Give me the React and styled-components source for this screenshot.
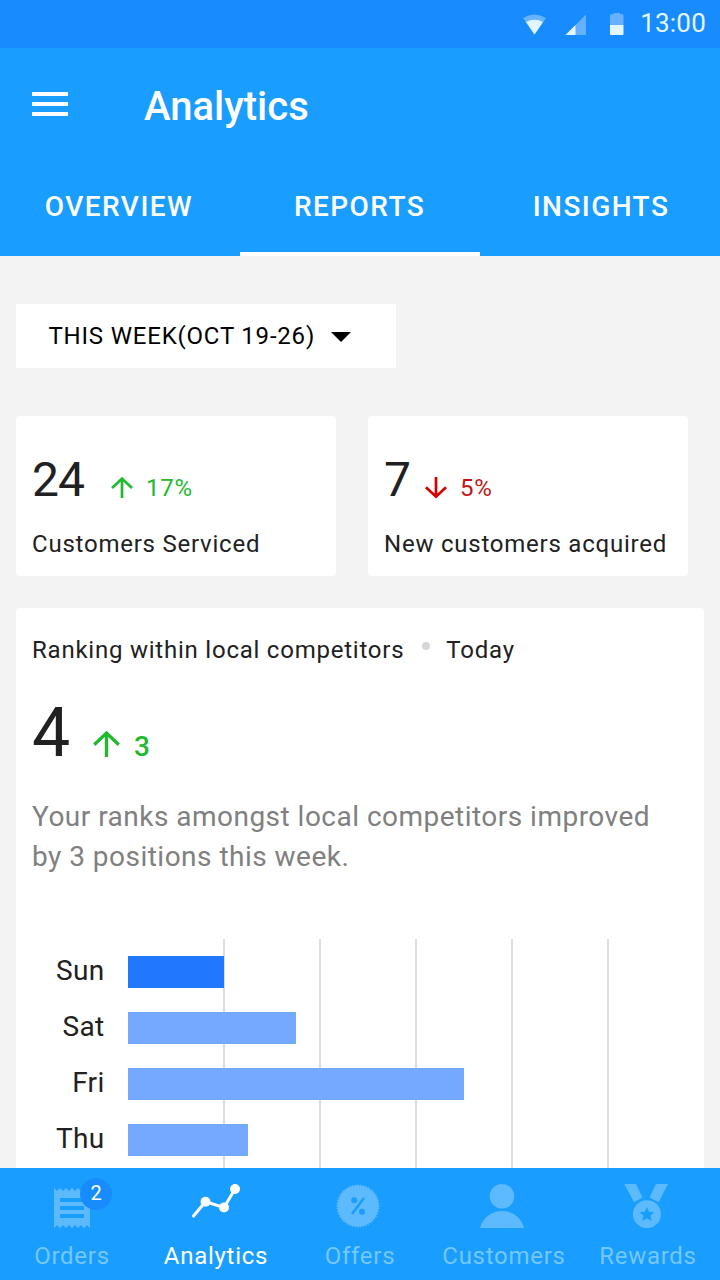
import React from 'react';
import styled, { createGlobalStyle } from 'styled-components';

const GlobalStyle = createGlobalStyle`
  *, *::before, *::after { box-sizing: border-box; }
  body { margin: 0; background: #f3f3f3; font-family: Roboto, "Liberation Sans", sans-serif; }
  button { font: inherit; border: 0; padding: 0; background: none; color: inherit; }
  svg { display: block; flex: none; }
`;

const Screen = styled.div`
  width: 720px;
  height: 1280px;
  display: flex;
  flex-direction: column;
  overflow: hidden;
  color: #212121;
`;

const StatusBar = styled.div`
  flex: none;
  height: 48px;
  padding-right: 14px;
  display: flex;
  align-items: center;
  justify-content: flex-end;
  background: #188bff;
`;

const Clock = styled.span`
  margin-left: 15px;
  padding-bottom: 2px;
  font-size: 26px;
  line-height: 46px;
  letter-spacing: 0.2px;
  color: #e4f7ff;
`;

const AppBar = styled.header`
  flex: none;
  height: 208px;
  display: flex;
  flex-direction: column;
  background: #199dff;
  color: #fff;
`;

const TitleRow = styled.div`
  height: 112px;
  padding: 0 32px;
  display: flex;
  align-items: center;
`;

const MenuButton = styled.button`
  width: 36px;
  display: flex;
  flex-direction: column;
  gap: 6px;
`;

const MenuLine = styled.span`
  height: 4px;
  background: #fff;
`;

const Title = styled.h1`
  margin: 5px 0 0 76px;
  font-size: 40px;
  line-height: 48px;
  font-weight: 500;
`;

const Tabs = styled.nav`
  flex: 1;
  display: grid;
  grid-template-columns: repeat(3, 240px);
`;

const Tab = styled.button`
  padding: ${(p) => p.$inset || '2px 0 0'};
  font-size: 28px;
  line-height: 90px;
  font-weight: 500;
  letter-spacing: 1.45px;
  border-bottom: 4px solid ${(p) => (p.$active ? '#fff' : 'transparent')};
`;

const Content = styled.main`
  flex: 1;
  min-height: 0;
  overflow: hidden;
  padding: 48px 16px 0;
  display: flex;
  flex-direction: column;
  align-items: stretch;
`;

const PeriodSelect = styled.button`
  flex: none;
  width: 380px;
  height: 64px;
  padding-left: 32.5px;
  display: flex;
  align-items: center;
  gap: 15.5px;
  background: #fff;
  color: #000;
  font-size: 24px;
  line-height: 64px;
  letter-spacing: 0.8px;

  svg { margin-top: 2px; }
`;

const Stats = styled.section`
  flex: none;
  margin: 48px 0 32px;
  display: flex;
  gap: 32px;
`;

const Card = styled.article`
  background: #fff;
  border-radius: 4px;
`;

const StatCard = styled(Card)`
  width: 320px;
  height: 160px;
  padding: 36px 16px 0;
`;

const Figures = styled.div`
  display: flex;
  align-items: baseline;
`;

const Value = styled.span`
  width: ${(p) => p.$width}px;
  font-size: ${(p) => p.$size}px;
  line-height: 56px;
  letter-spacing: -1px;
`;

const Delta = styled.span`
  display: flex;
  align-items: baseline;
  gap: ${(p) => p.$gap}px;
  font-size: ${(p) => p.$size}px;
  font-weight: ${(p) => p.$weight || 400};
  line-height: 32px;
  letter-spacing: 0.7px;
  color: ${(p) => p.$color};

  svg { transform: translateY(${(p) => p.$drop}px); }
`;

const Label = styled.div`
  font-size: 24px;
  line-height: 32px;
  letter-spacing: 0.77px;
  white-space: nowrap;
`;

const StatLabel = styled(Label)`
  margin-top: 20px;
`;

const RankingCard = styled(Card)`
  flex: none;
  padding: 26px 16px 0;
`;

const RankingHeading = styled.div`
  display: flex;
  align-items: center;
`;

const Dot = styled.i`
  width: 8px;
  height: 8px;
  margin: -8px 16px 0 18px;
  border-radius: 50%;
  background: #d6d6d6;
`;

const RankFigures = styled(Figures)`
  margin-top: 39px;
`;

const Summary = styled.p`
  margin: 34px 0 0;
  font-size: 28px;
  line-height: 40px;
  letter-spacing: 0.48px;
  color: #808080;
  white-space: nowrap;
`;

const Chart = styled.div`
  margin-top: 62px;
  display: grid;
  grid-template-columns: 72.5px 1fr;
  column-gap: 23.5px;
`;

const Days = styled.div`
  padding-top: 17px;
  display: grid;
  grid-auto-rows: 32px;
  row-gap: 24px;
  text-align: right;
  font-size: 28px;
  line-height: 30px;
  letter-spacing: 0.3px;
`;

const Plot = styled.div`
  display: grid;
  > * { grid-area: 1 / 1; }
`;

const GridLines = styled.div`
  display: flex;
  padding-left: 1px;
`;

const GridLine = styled.i`
  width: 96px;
  border-right: 2px solid #dcdcdc;
`;

const Bars = styled.div`
  padding: 17px 0 24px;
  display: grid;
  grid-auto-rows: 32px;
  row-gap: 24px;
`;

const Bar = styled.div`
  background: ${(p) => (p.$current ? '#2277ff' : '#75a9ff')};
`;

const BottomNav = styled.nav`
  flex: none;
  height: 112px;
  display: grid;
  grid-template-columns: repeat(5, 144px);
  background: #199dff;
`;

const NavItem = styled.button`
  position: relative;
  display: flex;
  flex-direction: column;
  align-items: center;
  justify-content: flex-start;
  padding-top: 12px;
  font-size: 24px;
  line-height: 32px;
  letter-spacing: 0.72px;
  color: ${(p) => (p.$active ? '#fff' : '#75c8ff')};

  svg { color: ${(p) => (p.$active ? '#fff' : '#5ebaff')}; margin-bottom: 12px; }
`;

const Badge = styled.span`
  position: absolute;
  left: 80px;
  top: 10px;
  width: 32px;
  height: 32px;
  border-radius: 50%;
  background: #188bff;
  color: #fff;
  font-size: 20px;
  line-height: 31px;
  letter-spacing: 0;
  text-align: center;
`;

const Arrow = ({ size, down }) => (
  <svg width={size} height={size} viewBox="0 0 22 22" fill="none" stroke={down ? '#d50000' : '#22b92f'} strokeWidth="2.7">
    <path d={down ? 'M11 0V20M1 10.2L11 19.700L21 10.2' : 'M11 22V2.500M1 12L11 2.500L21 12'} />
  </svg>
);

const StatusIcons = () => (
  <svg width="104" height="24" viewBox="521 12 104 24">
    <path d="M523 18Q534.500 11 546 18L534.500 34.500Z" fill="#68b3ff" />
    <path d="M526 22Q534.500 17.500 543 22L534.500 34.500Z" fill="#e3f5ff" />
    <path d="M565.500 35L586 14.500V35Z" fill="#65b1ff" />
    <path d="M565.500 35L575.500 25V35Z" fill="#e3f5ff" />
    <path d="M613.500 13H620V14.200H622Q623.500 14.200 623.500 15.500V25H610V15.500Q610 14.200 611.500 14.200H613.500Z" fill="#65b1ff" />
    <path d="M610 25H623.500V34Q623.500 35 622.500 35H611Q610 35 610 34Z" fill="#e3f5ff" />
  </svg>
);

const toothed = (left, right, y, dir) => {
  const step = (right - left) / 6;
  let d = '';
  for (let i = 0; i < 6; i += 1) {
    const a = dir > 0 ? left + i * step : right - i * step;
    d += `L${a + (dir * step) / 2} ${y + dir * 3}L${a + dir * step} ${y}`;
  }
  return d;
};

const OrdersIcon = () => (
  <svg width="48" height="48" viewBox="0 0 48 48">
    <path d={`M6 8${toothed(6, 42, 8, 1)}V48${toothed(6, 42, 48, -1)}Z`} fill="currentColor" />
    <path d="M12 20H36M12 28H36M12 36H36" stroke="#199dff" strokeWidth="4" />
  </svg>
);

const AnalyticsIcon = () => (
  <svg width="48" height="48" viewBox="0 0 48 48">
    <path d="M1.500 36L13.500 21.700L32 27.500L43 9" fill="none" stroke="currentColor" strokeWidth="3" strokeLinecap="round" />
    <circle cx="13.500" cy="21.700" r="5" fill="currentColor" />
    <circle cx="32" cy="27.500" r="5" fill="currentColor" />
    <circle cx="43" cy="9" r="5" fill="currentColor" />
  </svg>
);

const sealPoints = Array.from({ length: 96 }, (_, i) => {
  const r = i % 2 ? 20.2 : 21.8;
  const a = (i * Math.PI) / 48;
  return `${(22 + r * Math.cos(a)).toFixed(2)},${(26 + r * Math.sin(a)).toFixed(2)}`;
}).join(' ');

const OffersIcon = () => (
  <svg width="48" height="48" viewBox="0 0 48 48">
    <polygon points={sealPoints} fill="currentColor" />
    <path d="M16 34L28 18" stroke="#199dff" strokeWidth="2.500" />
    <circle cx="18.200" cy="20.200" r="3" fill="#199dff" />
    <circle cx="26" cy="31.800" r="3" fill="#199dff" />
  </svg>
);

const CustomersIcon = () => (
  <svg width="48" height="48" viewBox="0 0 48 48">
    <circle cx="22" cy="16.300" r="12.300" fill="currentColor" />
    <path d="M0 48C3 37 12 31 22 31S41 37 44 48Z" fill="currentColor" />
  </svg>
);

const RewardsIcon = () => (
  <svg width="48" height="48" viewBox="0 0 48 48">
    <path d="M0.300 4H12L18.500 17.500L10 22.200Z" fill="currentColor" />
    <path d="M44 4H32L25.500 17.500L34.500 22.200Z" fill="currentColor" />
    <circle cx="22.900" cy="34.200" r="14" fill="currentColor" />
    <path d="M22.900 27L25.100 31.800L30.400 32.200L26.400 35.700L27.700 41L22.900 38.200L18.200 41L19.500 35.700L15.500 32.200L20.800 31.800Z" fill="#199dff" />
  </svg>
);

const days = [
  { name: 'Sun', value: 96, current: true },
  { name: 'Sat', value: 168 },
  { name: 'Fri', value: 336 },
  { name: 'Thu', value: 120 },
];

const navItems = [
  { name: 'Orders', Icon: OrdersIcon, badge: 2 },
  { name: 'Analytics', Icon: AnalyticsIcon, active: true },
  { name: 'Offers', Icon: OffersIcon },
  { name: 'Customers', Icon: CustomersIcon },
  { name: 'Rewards', Icon: RewardsIcon },
];

export default function App() {
  return (
    <>
      <GlobalStyle />
      <Screen>
        <StatusBar>
          <StatusIcons />
          <Clock>13:00</Clock>
        </StatusBar>
        <AppBar>
          <TitleRow>
            <MenuButton aria-label="Menu">
              <MenuLine />
              <MenuLine />
              <MenuLine />
            </MenuButton>
            <Title>Analytics</Title>
          </TitleRow>
          <Tabs>
            <Tab $inset="2px 2px 0 0">OVERVIEW</Tab>
            <Tab $active $inset="2px 1px 0 0">REPORTS</Tab>
            <Tab $inset="2px 0 0 2px">INSIGHTS</Tab>
          </Tabs>
        </AppBar>
        <Content>
          <PeriodSelect>
            THIS WEEK(OCT 19-26)
            <svg width="20" height="10" viewBox="0 0 20 10">
              <path d="M0 0H20L10 10Z" />
            </svg>
          </PeriodSelect>
          <Stats>
            <StatCard>
              <Figures>
                <Value $size={48} $width={79}>24</Value>
                <Delta $size={24} $gap={13} $drop={2} $color="#22b92f">
                  <Arrow size={22} />
                  17%
                </Delta>
              </Figures>
              <StatLabel>Customers Serviced</StatLabel>
            </StatCard>
            <StatCard>
              <Figures>
                <Value $size={48} $width={41}>7</Value>
                <Delta $size={24} $gap={13} $drop={3} $color="#c41414">
                  <Arrow size={22} down />
                  5%
                </Delta>
              </Figures>
              <StatLabel>New customers acquired</StatLabel>
            </StatCard>
          </Stats>
          <RankingCard>
            <RankingHeading>
              <Label>Ranking within local competitors</Label>
              <Dot />
              <Label>Today</Label>
            </RankingHeading>
            <RankFigures>
              <Value $size={68} $width={60.5}>4</Value>
              <Delta $size={28} $gap={14.5} $weight={500} $drop={1} $color="#22b92f">
                <Arrow size={27} />
                3
              </Delta>
            </RankFigures>
            <Summary>
              Your ranks amongst local competitors improved
              <br />
              by 3 positions this week.
            </Summary>
            <Chart>
              <Days>
                {days.map((d) => (
                  <span key={d.name}>{d.name}</span>
                ))}
              </Days>
              <Plot>
                <GridLines>
                  {[1, 2, 3, 4, 5].map((n) => (
                    <GridLine key={n} />
                  ))}
                </GridLines>
                <Bars>
                  {days.map((d) => (
                    <Bar key={d.name} $current={d.current} style={{ width: d.value }} />
                  ))}
                </Bars>
              </Plot>
            </Chart>
          </RankingCard>
        </Content>
        <BottomNav>
          {navItems.map(({ name, Icon, active, badge }) => (
            <NavItem key={name} $active={active}>
              <Icon />
              {name}
              {badge && <Badge>{badge}</Badge>}
            </NavItem>
          ))}
        </BottomNav>
      </Screen>
    </>
  );
}
